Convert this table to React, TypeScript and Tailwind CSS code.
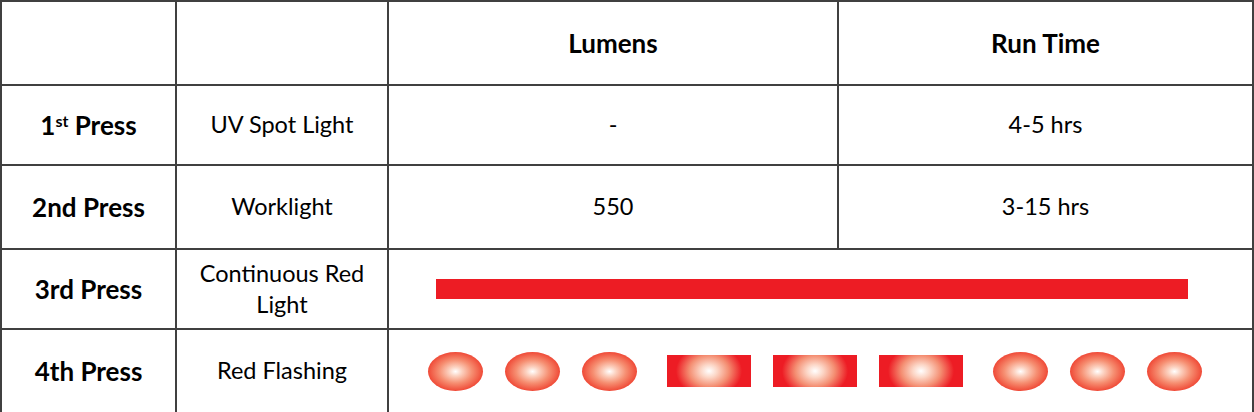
import React from 'react';

const Oval = () => (
  <div className="w-[55px] h-[39px] shrink-0 rounded-[50%] bg-[radial-gradient(ellipse_at_center,#ffffff_0%,#fcd3c2_16%,#f68f72_42%,#f0503c_68%,#ee1c24_92%)]" />
);

const Block = () => (
  <div className="w-[84px] h-[32px] shrink-0 bg-[#ed1c24] bg-[radial-gradient(ellipse_33px_26px_at_center,#ffffff_0%,#fcd6c6_25%,#f48e72_60%,#ed1c24_100%)]" />
);

const cell = 'border-2 border-[#404040] text-center align-middle p-0';

const App: React.FC = () => {
  return (
    <div className="w-[1254px] h-[412px] bg-white font-['Lato',sans-serif] text-black">
      <table className="w-[1254px] h-[412px] table-fixed border-collapse">
        <colgroup>
          <col className="w-[175px]" />
          <col className="w-[212px]" />
          <col className="w-[450px]" />
          <col />
        </colgroup>
        <tbody>
          <tr className="h-[84px]">
            <td className={cell}></td>
            <td className={cell}></td>
            <td className={`${cell} text-[26px] font-bold`}>Lumens</td>
            <td className={`${cell} text-[26px] font-bold`}>Run Time</td>
          </tr>
          <tr className="h-[80px]">
            <td className={`${cell} text-[26px] font-bold`}>
              1<sup className="text-[16px]">st</sup> Press
            </td>
            <td className={`${cell} text-[23.5px]`}>UV Spot Light</td>
            <td className={`${cell} text-[23.5px]`}>-</td>
            <td className={`${cell} text-[23.5px]`}>4-5 hrs</td>
          </tr>
          <tr className="h-[84px]">
            <td className={`${cell} text-[26px] font-bold`}>2nd Press</td>
            <td className={`${cell} text-[23.5px]`}>Worklight</td>
            <td className={`${cell} text-[23.5px]`}>550</td>
            <td className={`${cell} text-[23.5px]`}>3-15 hrs</td>
          </tr>
          <tr className="h-[80px]">
            <td className={`${cell} text-[26px] font-bold`}>3rd Press</td>
            <td className={`${cell} text-[23.5px] leading-[31px]`}>
              Continuous Red
              <br />
              Light
            </td>
            <td className={`${cell} text-left`} colSpan={2}>
              <div className="ml-[47px] w-[752px] h-[20px] bg-[#ed1c24]" />
            </td>
          </tr>
          <tr className="h-[84px]">
            <td className={`${cell} text-[26px] font-bold`}>4th Press</td>
            <td className={`${cell} text-[23.5px]`}>Red Flashing</td>
            <td className={`${cell} text-left`} colSpan={2}>
              <div className="flex items-center pl-[39px]">
                <div className="flex gap-[22px]">
                  <Oval />
                  <Oval />
                  <Oval />
                </div>
                <div className="flex gap-[22px] ml-[30px]">
                  <Block />
                  <Block />
                  <Block />
                </div>
                <div className="flex gap-[22px] ml-[30px]">
                  <Oval />
                  <Oval />
                  <Oval />
                </div>
              </div>
            </td>
          </tr>
        </tbody>
      </table>
    </div>
  );
};

export default App;
